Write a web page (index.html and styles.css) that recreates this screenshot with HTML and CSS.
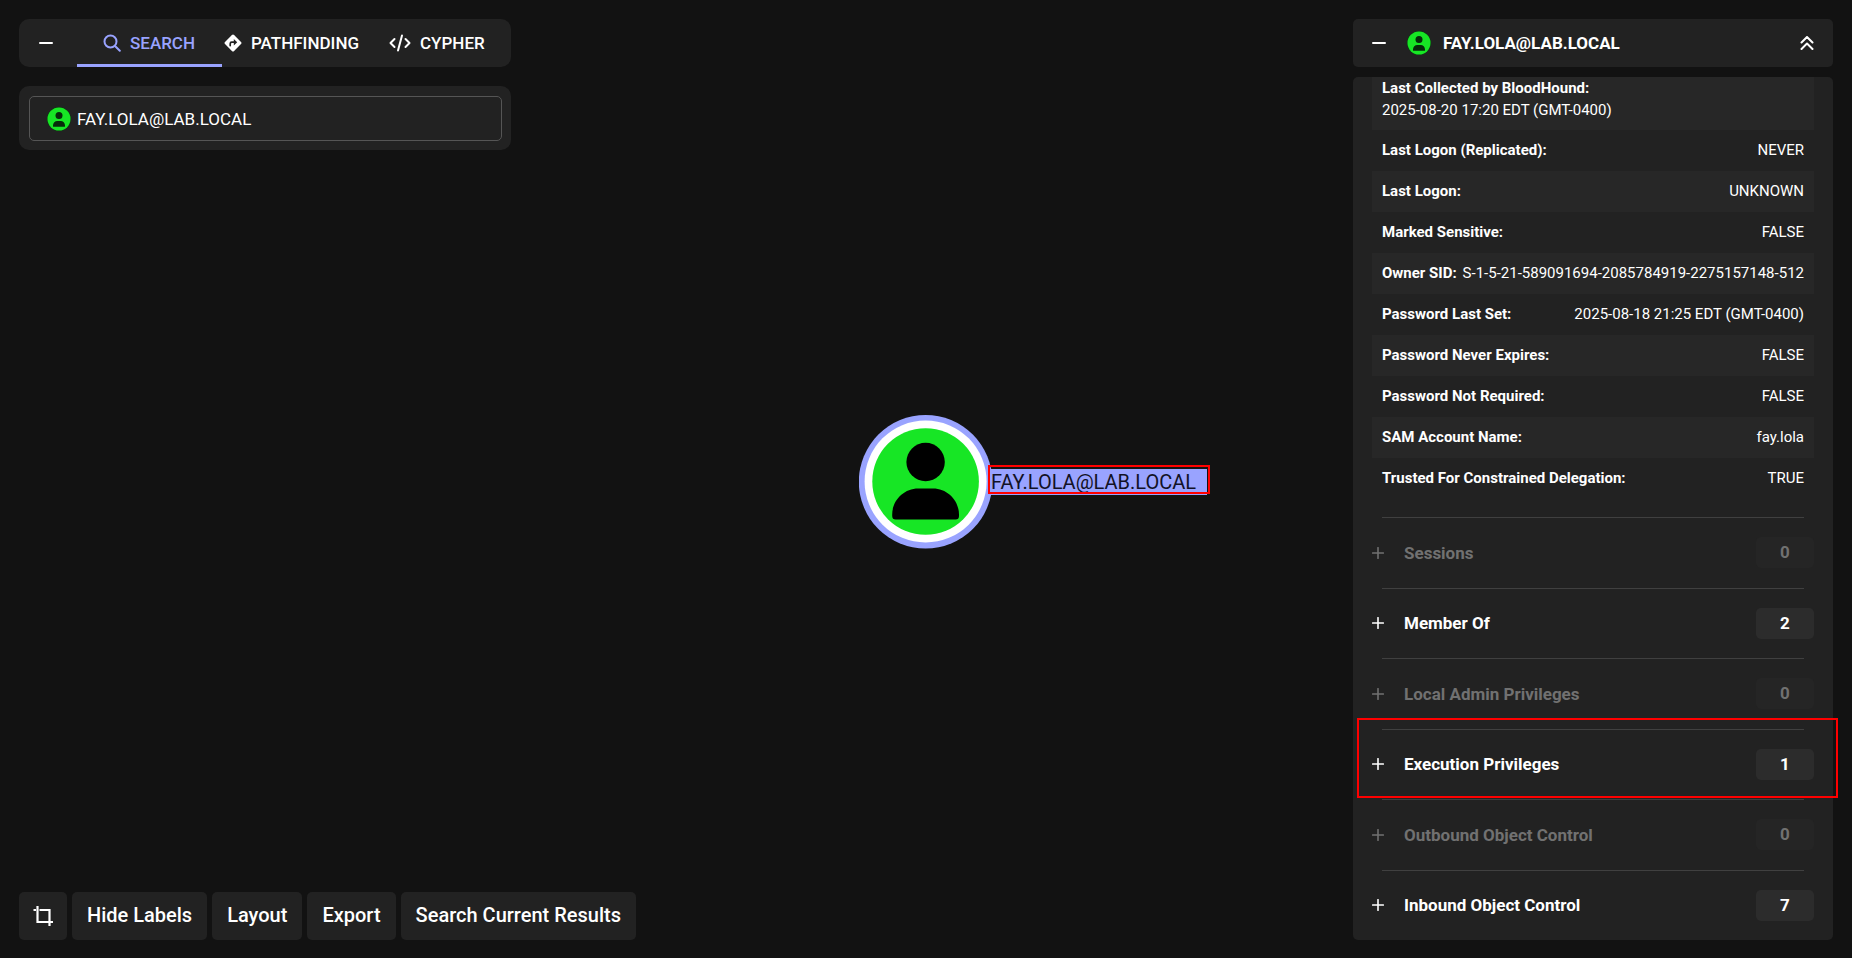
FILE: index.html
```html
<!DOCTYPE html>
<html lang="en">
<head>
<meta charset="utf-8">
<title>Explore</title>
<link rel="stylesheet" href="styles.css">
</head>
<body>
<svg class="defs" aria-hidden="true">
  <symbol id="user" viewBox="0 0 24 24">
    <circle cx="12" cy="12" r="12" fill="#0b3d10"/>
    <circle cx="12" cy="12" r="11.5" fill="#17e625"/>
    <circle cx="12" cy="8.6" r="3.5" fill="#062c0a"/>
    <path d="M6 19.2v-.8a4.3 4.3 0 0 1 4.3-4.3h3.4a4.3 4.3 0 0 1 4.3 4.3v.8a.5.5 0 0 1-.5.5h-11a.5.5 0 0 1-.5-.5z" fill="#062c0a"/>
  </symbol>
  <symbol id="minus" viewBox="0 0 14 14"><path d="M1 7h12" stroke="currentColor" stroke-width="2" stroke-linecap="round"/></symbol>
  <symbol id="plus" viewBox="0 0 12 12"><path d="M.7 6h10.6M6 .7v10.6" stroke="currentColor" stroke-width="1.6" stroke-linecap="round"/></symbol>
</svg>
<div class="app">
  <main class="graph">
    <div class="node">
      <svg class="node-icon" viewBox="0 0 134 134" role="img" aria-label="User">
        <circle cx="66.600" cy="66.800" r="66.800" fill="#99a3ff"/>
        <circle cx="66.600" cy="66.500" r="61" fill="#fff"/>
        <circle cx="66.600" cy="66.500" r="53.300" fill="#17e625"/>
        <circle cx="66.600" cy="47" r="19.200" fill="#000"/>
        <path d="M33.200 101v-1.500c0-14 11.500-26 26-26h14.800c14.500 0 26 12 26 26v1.500a3.500 3.500 0 0 1-3.500 3.500h-59.800a3.500 3.500 0 0 1-3.500-3.500z" fill="#000"/>
      </svg>
      <span class="node-label">FAY.LOLA@LAB.LOCAL</span>
      <span class="mark node-mark"></span>
    </div>
  </main>

  <div class="left">
    <nav class="panel tabs">
      <button class="collapse" aria-label="Collapse"><svg class="i14"><use href="#minus"/></svg></button>
      <button class="tab active"><svg class="i18" viewBox="0 0 18 18" fill="none" stroke="currentColor" stroke-width="2" stroke-linecap="round"><circle cx="7.500" cy="7.500" r="6"/><path d="M12 12l4.800 4.800"/></svg>SEARCH</button>
      <button class="tab path"><svg class="i18" viewBox="0 0 18 18"><path d="M7.900 1a1.600 1.600 0 0 1 2.200 0L17 7.900a1.600 1.600 0 0 1 0 2.200L10.100 17a1.600 1.600 0 0 1-2.200 0L1 10.100a1.600 1.600 0 0 1 0-2.200z" fill="currentColor"/><path d="M6.200 11.600V9.800a1.600 1.600 0 0 1 1.600-1.600h3" fill="none" stroke="#222" stroke-width="1.700" stroke-linecap="round"/><path d="M9.800 5l3.400 3.200-3.400 3.200z" fill="#222"/></svg>PATHFINDING</button>
      <button class="tab"><svg class="i22" viewBox="0 0 22 18" fill="none" stroke="currentColor" stroke-width="2" stroke-linecap="round" stroke-linejoin="round"><path d="M5.500 5L1.500 9l4 4M16.500 5l4 4-4 4M13 1.500l-4 15"/></svg>CYPHER</button>
    </nav>
    <section class="panel search">
      <label class="field"><svg class="i24"><use href="#user"/></svg><input type="text" aria-label="Search nodes" value="FAY.LOLA@LAB.LOCAL"></label>
    </section>
    <div class="toolbar">
      <button class="tool crop" aria-label="Reset view"><svg class="i20" viewBox="0 0 20 20" fill="none" stroke="currentColor" stroke-width="2.200"><path d="M4.500 0v16H20M.5 4h2.500M6.500 4h10v11M16.500 16.500V20"/></svg></button>
      <button class="tool">Hide Labels</button>
      <button class="tool">Layout</button>
      <button class="tool">Export</button>
      <button class="tool">Search Current Results</button>
    </div>
  </div>

  <aside class="right">
    <header class="head">
      <button class="plain" aria-label="Collapse"><svg class="i14"><use href="#minus"/></svg></button>
      <svg class="i24"><use href="#user"/></svg>
      <h1>FAY.LOLA@LAB.LOCAL</h1>
      <button class="plain" aria-label="Collapse all"><svg class="i14" viewBox="0 0 14 14" fill="none" stroke="currentColor" stroke-width="2" stroke-linecap="round" stroke-linejoin="round"><path d="M1.500 6.500L7 1l5.500 5.500M1.500 13L7 7.500l5.500 5.500"/></svg></button>
    </header>
    <div class="body">
      <dl class="props">
        <div class="prop stacked"><dt>Last Collected by BloodHound:</dt><dd>2025-08-20 17:20 EDT (GMT-0400)</dd></div>
        <div class="prop"><dt>Last Logon (Replicated):</dt><dd>NEVER</dd></div>
        <div class="prop"><dt>Last Logon:</dt><dd>UNKNOWN</dd></div>
        <div class="prop"><dt>Marked Sensitive:</dt><dd>FALSE</dd></div>
        <div class="prop"><dt>Owner SID:</dt><dd>S-1-5-21-589091694-2085784919-2275157148-512</dd></div>
        <div class="prop"><dt>Password Last Set:</dt><dd>2025-08-18 21:25 EDT (GMT-0400)</dd></div>
        <div class="prop"><dt>Password Never Expires:</dt><dd>FALSE</dd></div>
        <div class="prop"><dt>Password Not Required:</dt><dd>FALSE</dd></div>
        <div class="prop"><dt>SAM Account Name:</dt><dd>fay.lola</dd></div>
        <div class="prop"><dt>Trusted For Constrained Delegation:</dt><dd>TRUE</dd></div>
      </dl>
      <div class="sections">
        <div class="section"><button class="expand" disabled><svg class="i12"><use href="#plus"/></svg>Sessions<span class="count">0</span></button></div>
        <div class="section"><button class="expand"><svg class="i12"><use href="#plus"/></svg>Member Of<span class="count">2</span></button></div>
        <div class="section"><button class="expand" disabled><svg class="i12"><use href="#plus"/></svg>Local Admin Privileges<span class="count">0</span></button></div>
        <div class="section"><button class="expand"><svg class="i12"><use href="#plus"/></svg>Execution Privileges<span class="count">1</span></button><span class="mark section-mark"></span></div>
        <div class="section"><button class="expand" disabled><svg class="i12"><use href="#plus"/></svg>Outbound Object Control<span class="count">0</span></button></div>
        <div class="section"><button class="expand"><svg class="i12"><use href="#plus"/></svg>Inbound Object Control<span class="count">7</span></button></div>
      </div>
    </div>
  </aside>
</div>
</body>
</html>
```
FILE: styles.css
```css
* { box-sizing: border-box; }
body {
  margin: 0;
  background: #121212;
  color: #fff;
  font-family: Roboto, "Liberation Sans", sans-serif;
}
button {
  border: 0;
  padding: 0;
  background: none;
  color: inherit;
  font: inherit;
}
.defs { position: absolute; width: 0; height: 0; }
svg { flex: none; display: block; }
.i12 { width: 12px; height: 12px; }
.i14 { width: 14px; height: 14px; }
.i18 { width: 18px; height: 18px; }
.i20 { width: 20px; height: 20px; }
.i22 { width: 22px; height: 18px; }
.i24 { width: 24px; height: 24px; }

.app {
  position: relative;
  display: flex;
  justify-content: space-between;
  height: 100vh;
  min-height: 900px;
  padding: 19px 19px 18px;
}

/* graph canvas behind the panels */
.graph {
  position: absolute;
  inset: 6px 0 0;
  display: flex;
  align-items: center;
  justify-content: center;
}
.node { position: relative; }
.node-icon { width: 134px; height: 134px; }
.node-label {
  position: absolute;
  left: 129px;
  top: 54px;
  padding: 0 11px 0 3px;
  background: #99a3ff;
  color: #121225;
  font-size: 20px;
  line-height: 26px;
}
.mark { position: absolute; border: 2px solid #f00; pointer-events: none; }
.node-mark { left: 129px; top: 50px; width: 222px; height: 29px; }

.left {
  position: relative;
  display: flex;
  flex-direction: column;
  align-items: flex-start;
}
.panel { width: 492px; background: #222; border-radius: 10px; }
.tabs {
  display: flex;
  height: 48px;
  padding: 0 24px 0 20px;
  margin-bottom: 19px;
}
.collapse { width: 38px; }
.tab {
  display: flex;
  align-items: center;
  gap: 9px;
  font-size: 17px;
  font-weight: 500;
  border-bottom: 3px solid transparent;
  padding-top: 3px;
}
.tab.active {
  width: 145px;
  padding-left: 26px;
  color: #99a3ff;
  border-bottom-color: #99a3ff;
}
.tab.path { width: 167px; padding-left: 2px; }
.search { padding: 10px 9px 9px 10px; }
.field {
  display: flex;
  align-items: center;
  gap: 6px;
  height: 45px;
  padding: 0 17px;
  border: 1px solid #555;
  border-radius: 5px;
}
.field input {
  flex: 1;
  min-width: 0;
  border: 0;
  padding: 0;
  background: none;
  color: #fff;
  font: 17px Roboto, "Liberation Sans", sans-serif;
  outline: 0;
}
.toolbar { display: flex; gap: 5px; margin-top: auto; }
.tool {
  height: 48px;
  padding: 0 15px 2px;
  border-radius: 5px;
  background: #222;
  font-size: 20px;
  font-weight: 500;
}
.tool.crop { padding: 0 14px; }

.right {
  position: relative;
  display: flex;
  flex-direction: column;
  gap: 10px;
  width: 480px;
}
.head {
  display: flex;
  align-items: center;
  height: 48px;
  padding: 0 19px;
  background: #222;
  border-radius: 5px;
}
.head .i24 { margin: 0 12px 0 21px; }
.head h1 { flex: 1; margin: 0; font-size: 17px; font-weight: 700; }
.body {
  flex: 1;
  display: flex;
  flex-direction: column;
  padding: 0 19px;
  background: #222;
  border-radius: 5px;
}
.props { margin: 0 0 18px; font-size: 15px; line-height: 22px; }
.prop {
  display: flex;
  justify-content: space-between;
  min-height: 41px;
  padding: 9px 10px 10px;
}
.prop:nth-child(odd) { background: #272727; }
.prop.stacked { display: block; padding: 0 10px 9px; }
dt { font-weight: 700; }
dd { margin: 0; }
.sections { flex: 1; display: flex; flex-direction: column; }
.section {
  position: relative;
  flex: 1;
  display: flex;
  flex-direction: column;
}
.section::before {
  content: "";
  height: 1px;
  margin: 0 10px;
  background: #404040;
}
.expand {
  flex: 1;
  display: flex;
  align-items: center;
  gap: 20px;
  font-size: 17px;
  font-weight: 700;
  text-align: left;
}
.expand:disabled { color: #717171; }
.count {
  width: 58px;
  margin-left: auto;
  border-radius: 5px;
  background: #2c2c2c;
  line-height: 31px;
  text-align: center;
}
.expand:disabled .count { background: #252525; }
.section-mark { left: -15px; right: -24px; top: -11px; height: 80px; }
```
